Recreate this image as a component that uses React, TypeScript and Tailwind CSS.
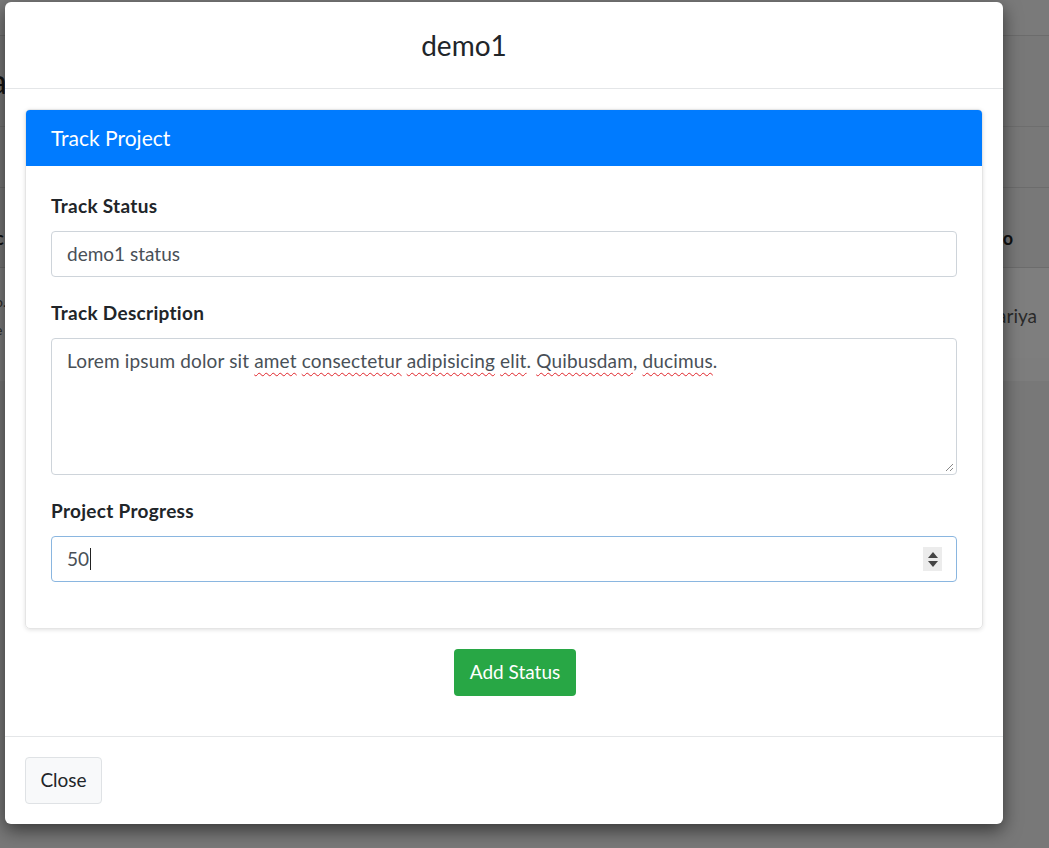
import React from "react";

const font = { fontFamily: '"Source Sans Pro", Lato, "Noto Sans", sans-serif' };

const spell = "underline decoration-wavy decoration-[#e0242a] decoration-1 underline-offset-[4px]";

function Backdrop() {
  return (
    <div className="flex flex-col bg-[#787878] text-[#111]">
      <div className="h-[36px] border-b border-[#6c6c6c] bg-[#7a7a7a]" />
      <div className="flex h-[91px] items-center border-b border-[#6e6e6e]">
        <span className="-ml-[10px] text-[34px] leading-none text-[#141414]">a</span>
      </div>
      <div className="h-[61px] border-b border-[#6c6c6c]" />
      <div className="flex h-[80px] items-end justify-between border-b border-[#6c6c6c] pb-[15px] text-[18px] font-bold">
        <span className="-ml-[5px]">c</span>
        <span className="mr-[36px]">Info</span>
      </div>
      <div className="flex h-[90px] items-center justify-between bg-[#7e7e7e] pt-[6px] text-[#2a2a2a]">
        <div className="-ml-[5px] flex flex-col text-[14px] leading-[28px]">
          <span>o.</span>
          <span>e</span>
        </div>
        <span className="mr-[12px] text-[19px]">Wariya</span>
      </div>
      <div className="h-[23px] bg-[#7d7d7d]" />
      <div className="h-[467px]" />
    </div>
  );
}

function Label({ children }: { children: React.ReactNode }) {
  return (
    <p className="mb-[12px] text-[19px] font-bold leading-[27px] tracking-[0.3px] text-[#212529]">
      {children}
    </p>
  );
}

export default function App() {
  return (
    <div className="relative h-[848px] overflow-hidden" style={font}>
      <Backdrop />

      <div className="absolute left-[5px] top-[2px] flex w-[998px] flex-col rounded-[6px] bg-white shadow-[0_6px_18px_rgba(0,0,0,0.55)]">
        <div className="flex h-[87px] items-center justify-center border-b border-[#e4e6e8] pr-[80px]">
          <h2 className="text-[28px] leading-none text-[#212529]">demo1</h2>
        </div>

        <div className="flex flex-col px-[20px] pb-[40px] pt-[20px]">
          <div className="rounded-[5px] border border-[#e5e5e5] shadow-[0_1px_4px_rgba(0,0,0,0.12)]">
            <div className="flex h-[56px] items-center rounded-t-[4px] bg-[#007bff] px-[25px] text-[21px] text-white">
              Track Project
            </div>
            <div className="px-[25px] pb-[46px] pt-[26px]">
              <Label>Track Status</Label>
              <div className="flex h-[46px] items-center rounded-[4px] border border-[#ced4da] px-[15px] text-[19px] text-[#495057]">
                demo1 status
              </div>

              <div className="mt-[22px]">
                <Label>Track Description</Label>
                <div className="relative h-[137px] rounded-[4px] border border-[#ced4da] px-[15px] pt-[8px] text-[19px] leading-[27px] tracking-[0.15px] text-[#495057]">
                  Lorem ipsum dolor sit <span className={spell}>amet</span>{" "}
                  <span className={spell}>consectetur</span>{" "}
                  <span className={spell}>adipisicing</span>{" "}
                  <span className={spell}>elit</span>.{" "}
                  <span className={spell}>Quibusdam</span>,{" "}
                  <span className={spell}>ducimus</span>.
                  <svg viewBox="0 0 10 10" className="absolute bottom-[2px] right-[2px] h-[10px] w-[10px]">
                    <path d="M9 2 2 9M9 6 6 9" stroke="#888" strokeWidth="1" />
                  </svg>
                </div>
              </div>

              <div className="mt-[22px]">
                <Label>Project Progress</Label>
                <div className="relative flex h-[46px] items-center rounded-[4px] border border-[#8ab6e0] px-[15px] text-[19px] text-[#495057]">
                  <span>50</span>
                  <span className="ml-px h-[22px] w-px bg-[#222]" />
                  <div className="absolute right-[14px] top-[10px] flex h-[24px] w-[19px] flex-col items-center justify-center gap-[3px] bg-[#ececec]">
                    <svg viewBox="0 0 10 6" className="h-[6px] w-[10px]">
                      <path d="M5 0 10 6H0z" fill="#444" />
                    </svg>
                    <svg viewBox="0 0 10 6" className="h-[6px] w-[10px]">
                      <path d="M0 0h10L5 6z" fill="#444" />
                    </svg>
                  </div>
                </div>
              </div>
            </div>
          </div>

          <div className="mt-[20px] flex justify-center pl-[22px]">
            <button
              type="button"
              className="h-[47px] w-[122px] rounded-[4px] bg-[#28a745] text-[19px] text-white"
            >
              Add Status
            </button>
          </div>
        </div>

        <div className="border-t border-[#e4e6e8] px-[20px] py-[20px]">
          <button
            type="button"
            className="h-[47px] w-[77px] rounded-[4px] border border-[#dfe2e5] bg-[#f8f9fa] text-[19px] text-[#212529]"
          >
            Close
          </button>
        </div>
      </div>
    </div>
  );
}
